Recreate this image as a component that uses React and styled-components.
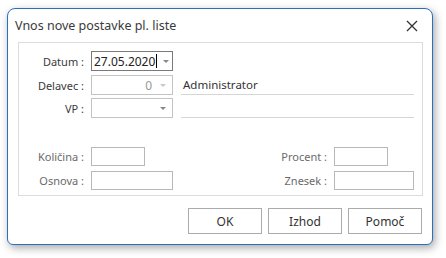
import React from 'react';
import styled, { createGlobalStyle } from 'styled-components';

const Global = createGlobalStyle`
  html, body { margin: 0; padding: 0; background: #fff; }
  body { font-family: "Noto Sans", "Liberation Sans", sans-serif; }
`;

const Page = styled.div`
  width: 446px;
  height: 258px;
  padding: 8px 0 0 7px;
  box-sizing: border-box;
`;

// the dialog window with its blue frame and soft shadow
const Window = styled.div`
  width: 426px;
  height: 237px;
  box-sizing: border-box;
  border: 1px solid #2a70c2;
  border-radius: 8px 8px 6px 6px;
  background: #fff;
  box-shadow: 2px 3px 9px rgba(0, 0, 0, 0.35);
  display: flex;
  flex-direction: column;
`;

const TitleBar = styled.div`
  height: 33px;
  display: flex;
  align-items: center;
  justify-content: space-between;
  padding: 0 14px 0 7px;
`;

const Title = styled.span`
  font-size: 12.5px;
  color: #3a3a3a;
`;

const Close = styled.svg`
  width: 12px;
  height: 12px;
`;

const Panel = styled.div`
  margin: 0 9px 0 10px;
  height: 154px;
  box-sizing: border-box;
  border: 1px solid #dcdcdc;
  padding: 8px 8px 0 0;
  display: flex;
  flex-direction: column;
`;

const Row = styled.div`
  display: flex;
  align-items: center;
  height: 20px;
  margin-top: ${p => p.$top || 0}px;
`;

const Label = styled.span`
  width: ${p => p.$w || 65}px;
  text-align: right;
  padding-right: 7px;
  font-size: 11px;
  color: ${p => (p.$dim ? '#6a6a6a' : '#3a3a3a')};
  flex-shrink: 0;
`;

const Combo = styled.div`
  width: 82px;
  height: 20px;
  box-sizing: border-box;
  border: 1px solid ${p => (p.$active ? '#7a7a7a' : '#c4c4c4')};
  display: flex;
  align-items: center;
  font-size: 12px;
  color: ${p => (p.$muted ? '#999' : '#222')};
`;

const ComboText = styled.span`
  flex: 1;
  padding: 0 2px;
  display: flex;
  align-items: center;
  justify-content: ${p => (p.$right ? 'flex-end' : 'flex-start')};
`;

const Caret = styled.span`
  width: 1px;
  height: 14px;
  background: #000;
  margin-left: 1px;
`;

const Arrow = styled.span`
  width: 18px;
  display: flex;
  justify-content: center;
  &::after {
    content: '';
    border-left: 3px solid transparent;
    border-right: 3px solid transparent;
    border-top: 3px solid ${p => (p.$muted ? '#c8c8c8' : '#888')};
  }
`;

const Line = styled.div`
  flex: 1;
  margin-left: 8px;
  align-self: stretch;
  border-bottom: 1px solid #d6d6d6;
  display: flex;
  align-items: center;
  font-size: 11.5px;
  color: #333;
  padding-left: 2px;
`;

const Spread = styled.div`
  display: flex;
  justify-content: space-between;
  align-items: center;
  margin-top: ${p => p.$top || 0}px;
`;

const Pair = styled.div`
  display: flex;
  align-items: center;
`;

const Slot = styled.div`
  width: ${p => p.$w}px;
  display: flex;
`;

const Field = styled.div`
  width: ${p => p.$w}px;
  height: 19px;
  box-sizing: border-box;
  border: 1px solid #b8b8b8;
`;

const Buttons = styled.div`
  display: flex;
  justify-content: flex-end;
  gap: 6px;
  padding: 12px 10px 0 0;
`;

const Button = styled.button`
  width: 74px;
  height: 26px;
  border: 1px solid #ababab;
  background: #fff;
  font-family: inherit;
  font-size: 12px;
  color: #333;
  padding: 0;
`;

export default function App() {
  return (
    <Page>
      <Global />
      <Window>
        <TitleBar>
          <Title>Vnos nove postavke pl. liste</Title>
          <Close viewBox="0 0 12 12">
            <path d="M1 1 L11 11 M11 1 L1 11" stroke="#333" strokeWidth="1.3" fill="none" />
          </Close>
        </TitleBar>
        <Panel>
          <Row>
            <Label>Datum :</Label>
            <Combo $active>
              <ComboText>27.05.2020<Caret /></ComboText>
              <Arrow />
            </Combo>
          </Row>
          <Row $top={4}>
            <Label>Delavec :</Label>
            <Combo $muted>
              <ComboText $right>0</ComboText>
              <Arrow $muted />
            </Combo>
            <Line>Administrator</Line>
          </Row>
          <Row $top={3}>
            <Label>VP :</Label>
            <Combo>
              <ComboText />
              <Arrow />
            </Combo>
            <Line />
          </Row>
          <Spread $top={29}>
            <Pair>
              <Label $dim>Količina :</Label>
              <Field $w={54} />
            </Pair>
            <Pair>
              <Label $dim>Procent :</Label>
              <Slot $w={80}><Field $w={54} /></Slot>
            </Pair>
          </Spread>
          <Spread $top={5}>
            <Pair>
              <Label $dim>Osnova :</Label>
              <Field $w={82} />
            </Pair>
            <Pair>
              <Label $dim>Znesek :</Label>
              <Slot $w={80}><Field $w={80} /></Slot>
            </Pair>
          </Spread>
        </Panel>
        <Buttons>
          <Button>OK</Button>
          <Button>Izhod</Button>
          <Button>Pomoč</Button>
        </Buttons>
      </Window>
    </Page>
  );
}
